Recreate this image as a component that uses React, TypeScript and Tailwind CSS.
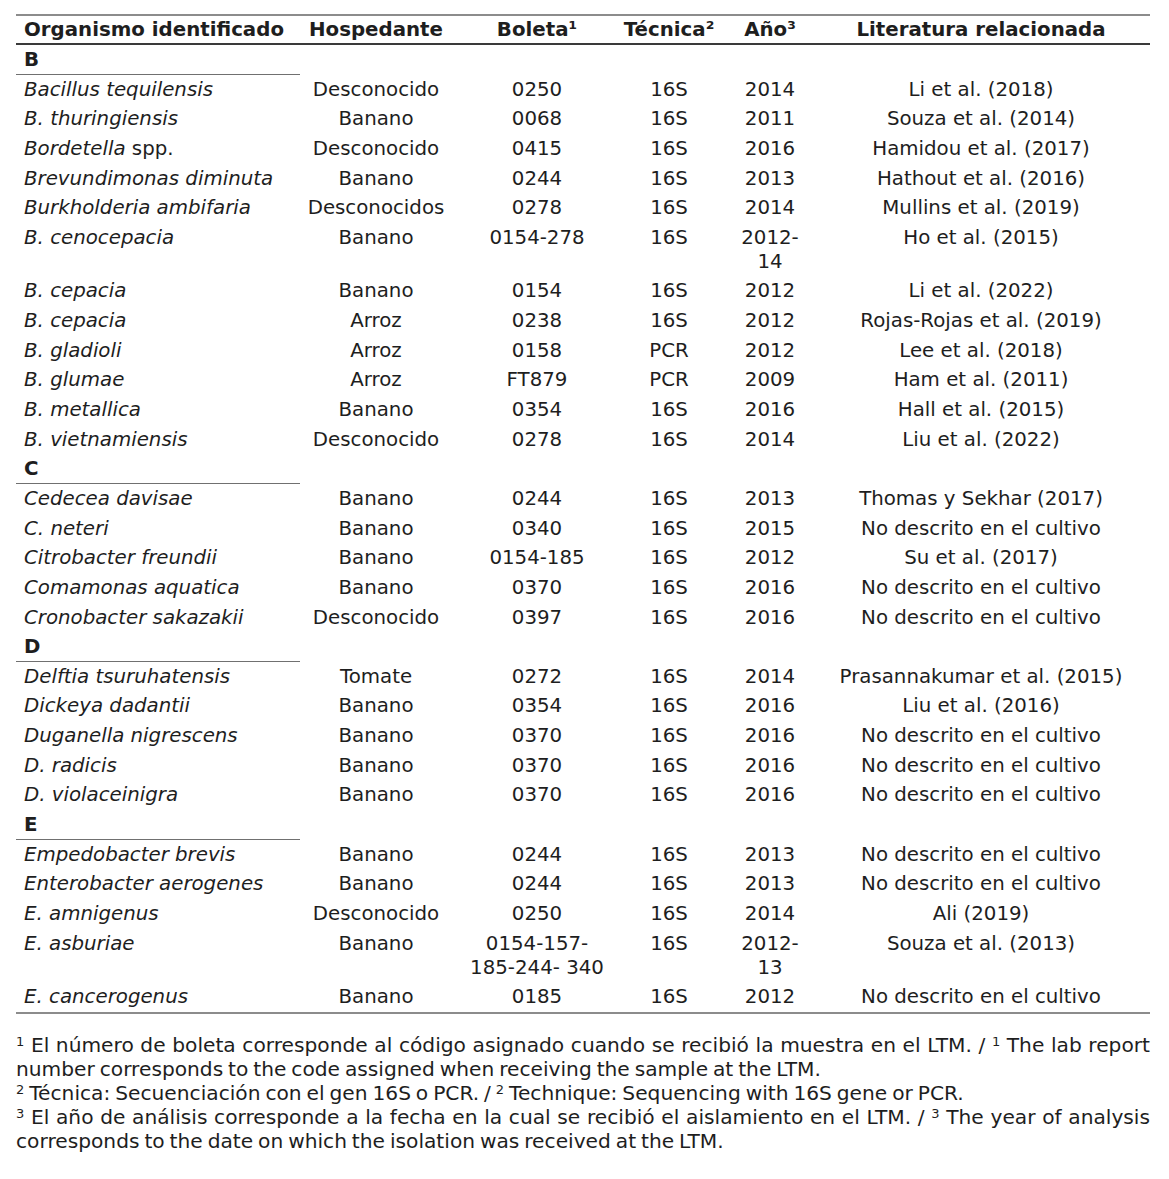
import React from "react";

type Row =
  | { kind: "group"; letter: string }
  | { kind: "item"; name: React.ReactNode; host: string; bol: React.ReactNode; tec: string; year: React.ReactNode; lit: string; two?: boolean };

const I = ({ children }: { children: React.ReactNode }) => <i>{children}</i>;

const rows: Row[] = [
  { kind: "group", letter: "B" },
  { kind: "item", name: <I>Bacillus tequilensis</I>, host: "Desconocido", bol: "0250", tec: "16S", year: "2014", lit: "Li et al. (2018)" },
  { kind: "item", name: <I>B. thuringiensis</I>, host: "Banano", bol: "0068", tec: "16S", year: "2011", lit: "Souza et al. (2014)" },
  { kind: "item", name: <><I>Bordetella</I> spp.</>, host: "Desconocido", bol: "0415", tec: "16S", year: "2016", lit: "Hamidou et al. (2017)" },
  { kind: "item", name: <I>Brevundimonas diminuta</I>, host: "Banano", bol: "0244", tec: "16S", year: "2013", lit: "Hathout et al. (2016)" },
  { kind: "item", name: <I>Burkholderia ambifaria</I>, host: "Desconocidos", bol: "0278", tec: "16S", year: "2014", lit: "Mullins et al. (2019)" },
  { kind: "item", name: <I>B. cenocepacia</I>, host: "Banano", bol: "0154-278", tec: "16S", year: <>2012-<br />14</>, lit: "Ho et al. (2015)", two: true },
  { kind: "item", name: <I>B. cepacia</I>, host: "Banano", bol: "0154", tec: "16S", year: "2012", lit: "Li et al. (2022)" },
  { kind: "item", name: <I>B. cepacia</I>, host: "Arroz", bol: "0238", tec: "16S", year: "2012", lit: "Rojas-Rojas et al. (2019)" },
  { kind: "item", name: <I>B. gladioli</I>, host: "Arroz", bol: "0158", tec: "PCR", year: "2012", lit: "Lee et al. (2018)" },
  { kind: "item", name: <I>B. glumae</I>, host: "Arroz", bol: "FT879", tec: "PCR", year: "2009", lit: "Ham et al. (2011)" },
  { kind: "item", name: <I>B. metallica</I>, host: "Banano", bol: "0354", tec: "16S", year: "2016", lit: "Hall et al. (2015)" },
  { kind: "item", name: <I>B. vietnamiensis</I>, host: "Desconocido", bol: "0278", tec: "16S", year: "2014", lit: "Liu et al. (2022)" },
  { kind: "group", letter: "C" },
  { kind: "item", name: <I>Cedecea davisae</I>, host: "Banano", bol: "0244", tec: "16S", year: "2013", lit: "Thomas y Sekhar (2017)" },
  { kind: "item", name: <I>C. neteri</I>, host: "Banano", bol: "0340", tec: "16S", year: "2015", lit: "No descrito en el cultivo" },
  { kind: "item", name: <I>Citrobacter freundii</I>, host: "Banano", bol: "0154-185", tec: "16S", year: "2012", lit: "Su et al. (2017)" },
  { kind: "item", name: <I>Comamonas aquatica</I>, host: "Banano", bol: "0370", tec: "16S", year: "2016", lit: "No descrito en el cultivo" },
  { kind: "item", name: <I>Cronobacter sakazakii</I>, host: "Desconocido", bol: "0397", tec: "16S", year: "2016", lit: "No descrito en el cultivo" },
  { kind: "group", letter: "D" },
  { kind: "item", name: <I>Delftia tsuruhatensis</I>, host: "Tomate", bol: "0272", tec: "16S", year: "2014", lit: "Prasannakumar et al. (2015)" },
  { kind: "item", name: <I>Dickeya dadantii</I>, host: "Banano", bol: "0354", tec: "16S", year: "2016", lit: "Liu et al. (2016)" },
  { kind: "item", name: <I>Duganella nigrescens</I>, host: "Banano", bol: "0370", tec: "16S", year: "2016", lit: "No descrito en el cultivo" },
  { kind: "item", name: <I>D. radicis</I>, host: "Banano", bol: "0370", tec: "16S", year: "2016", lit: "No descrito en el cultivo" },
  { kind: "item", name: <I>D. violaceinigra</I>, host: "Banano", bol: "0370", tec: "16S", year: "2016", lit: "No descrito en el cultivo" },
  { kind: "group", letter: "E" },
  { kind: "item", name: <I>Empedobacter brevis</I>, host: "Banano", bol: "0244", tec: "16S", year: "2013", lit: "No descrito en el cultivo" },
  { kind: "item", name: <I>Enterobacter aerogenes</I>, host: "Banano", bol: "0244", tec: "16S", year: "2013", lit: "No descrito en el cultivo" },
  { kind: "item", name: <I>E. amnigenus</I>, host: "Desconocido", bol: "0250", tec: "16S", year: "2014", lit: "Ali (2019)" },
  { kind: "item", name: <I>E. asburiae</I>, host: "Banano", bol: <>0154-157-<br />185-244- 340</>, tec: "16S", year: <>2012-<br />13</>, lit: "Souza et al. (2013)", two: true },
  { kind: "item", name: <I>E. cancerogenus</I>, host: "Banano", bol: "0185", tec: "16S", year: "2012", lit: "No descrito en el cultivo" },
];

const S = ({ n }: { n: string }) => (
  <span className="relative top-[-6px] text-[13px] leading-none">{n}</span>
);

export default function App() {
  return (
    <div
      className="bg-white text-[#1e1e1e] text-[19.8px] leading-[24px] w-[1169px] min-h-[1179px] pt-[14px] px-[16px]"
      style={{ fontFamily: '"DejaVu Sans", Verdana, sans-serif' }}
    >
      <div className="w-[1134px] border-t-2 border-[#8c8c8c]">
        <div className="flex h-[29px] items-center pt-[1px] border-b-2 border-[#3a3a3a] font-bold">
          <div className="w-[284px] pl-[8px]">Organismo identificado</div>
          <div className="w-[152px] text-center">Hospedante</div>
          <div className="w-[170px] text-center">Boleta¹</div>
          <div className="w-[94px] text-center">Técnica²</div>
          <div className="w-[108px] text-center">Año³</div>
          <div className="w-[326px] pr-[12px] text-center">Literatura relacionada</div>
        </div>
        {rows.map((r, i) =>
          r.kind === "group" ? (
            <div key={i} className="flex h-[29.65px]">
              <div className="w-[284px] pl-[8px] pt-[3px] font-bold border-b border-[#707070]">{r.letter}</div>
            </div>
          ) : (
            <div key={i} className={"flex items-start pt-[3px] " + (r.two ? "h-[53.65px]" : "h-[29.65px]")}>
              <div className="w-[284px] pl-[8px] whitespace-nowrap">{r.name}</div>
              <div className="w-[152px] text-center whitespace-nowrap">{r.host}</div>
              <div className="w-[170px] text-center whitespace-nowrap">{r.bol}</div>
              <div className="w-[94px] text-center">{r.tec}</div>
              <div className="w-[108px] text-center">{r.year}</div>
              <div className="w-[326px] pr-[12px] text-center whitespace-nowrap">{r.lit}</div>
            </div>
          )
        )}
        <div className="border-t-2 border-[#8c8c8c]" />
      </div>
      <div className="w-[1134px] mt-[19px] text-justify text-[20.2px] leading-[24px] [word-spacing:-1.5px]">
        <p>
          <S n="1" /> El número de boleta corresponde al código asignado cuando se recibió la muestra en el LTM. / <S n="1" /> The lab report number corresponds to the code assigned when receiving the sample at the LTM.
        </p>
        <p>
          <S n="2" /> Técnica: Secuenciación con el gen 16S o PCR. / <S n="2" /> Technique: Sequencing with 16S gene or PCR.
        </p>
        <p>
          <S n="3" /> El año de análisis corresponde a la fecha en la cual se recibió el aislamiento en el LTM. / <S n="3" /> The year of analysis corresponds to the date on which the isolation was received at the LTM.
        </p>
      </div>
    </div>
  );
}
